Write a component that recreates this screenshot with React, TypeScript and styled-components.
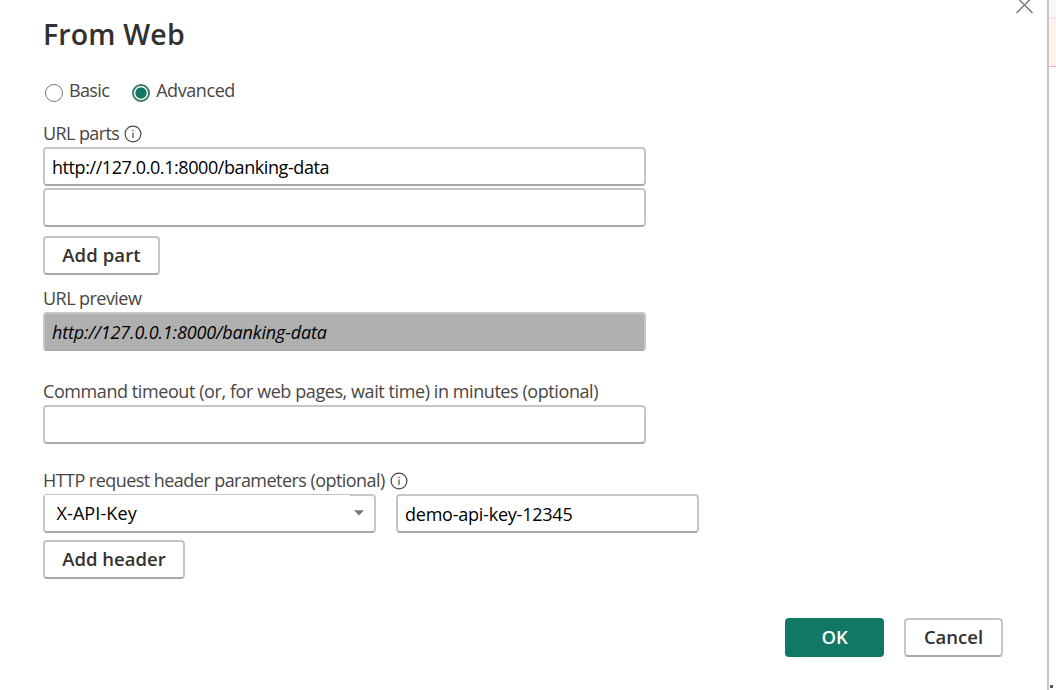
import React from "react";
import styled, { createGlobalStyle } from "styled-components";

const GlobalStyle = createGlobalStyle`
  * { box-sizing: border-box; }
  body {
    margin: 0;
    overflow: hidden;
    background: #fff;
    font-family: "Open Sans", "Noto Sans", sans-serif;
  }
`;

const Page = styled.div`
  display: flex;
  width: 1056px;
  height: 690px;
  background: #fff;
`;

const Dialog = styled.main`
  position: relative;
  display: flex;
  flex-direction: column;
  width: 1049px;
  height: 690px;
  padding: 14px 44px 0 43px;
  border-right: 2px solid #c6c6c6;
`;

const Backdrop = styled.aside`
  display: flex;
  flex-direction: column;
  width: 7px;
`;

const BackdropBar = styled.div`
  height: 19px;
  background: linear-gradient(#f9f9f9 0 16px, #e6e4e3);
`;

const BackdropAlert = styled.div`
  height: 48px;
  background: #fff1ee;
  border-bottom: 1px solid #f3b5a3;
`;

const BackdropMark = styled.div`
  width: 3px;
  height: 3px;
  margin: auto 0 2px 1px;
  background: #555;
`;

const CloseButton = styled.button`
  position: absolute;
  top: -4px;
  right: 13.5px;
  width: 19px;
  height: 19px;
  padding: 0;
  border: 0;
  background: none;
  svg { display: block; }
`;

const Label = styled.span<{ $spacing?: number }>`
  color: #484644;
  font-size: 18px;
  line-height: 24px;
  letter-spacing: ${(p) => p.$spacing ?? 0}px;
  white-space: pre;
`;

const Title = styled.h1`
  margin: 0;
  color: #323130;
  font-size: 28.5px;
  font-weight: 600;
  line-height: 40px;
  letter-spacing: 0.15px;
`;

const RadioGroup = styled.div`
  display: flex;
  gap: 23px;
  height: 24px;
  margin-top: 24px;
  padding-left: 2px;
`;

const RadioOption = styled.label`
  display: flex;
  gap: 6px;
`;

const RadioDot = styled.span<{ $checked?: boolean }>`
  width: 18px;
  height: 18px;
  margin-top: 6px;
  border: ${(p) => (p.$checked ? "2px solid #3d7a6c" : "1.5px solid #7c7c7c")};
  border-radius: 50%;
  background: ${(p) => (p.$checked ? "radial-gradient(circle, #117865 5.2px, #fff 6px)" : "#fff")};
`;

const Field = styled.section<{ $top: number }>`
  display: flex;
  flex-direction: column;
  margin-top: ${(p) => p.$top}px;
`;

const LabelRow = styled.div`
  display: flex;
  gap: 5px;
  height: 26px;
  svg { margin-top: 4.4px; }
`;

const TextBox = styled.div<{ $width?: number; $top?: number; $preview?: boolean; $spacing?: number }>`
  width: ${(p) => p.$width ?? 603}px;
  height: 39px;
  margin-top: ${(p) => p.$top ?? 0}px;
  padding: 1px 7px 0;
  border: 2px solid #c6c6c6;
  border-bottom-color: #a9a9a9;
  border-radius: 4px;
  background: ${(p) => (p.$preview ? "#b0b0b0" : "#fff")};
  color: #000;
  font-size: 18px;
  font-style: ${(p) => (p.$preview ? "italic" : "normal")};
  line-height: 34px;
  letter-spacing: ${(p) => p.$spacing ?? 0}px;
  white-space: pre;
`;

const HeaderRow = styled.div`
  display: flex;
  gap: 20px;
`;

const ComboBox = styled.div`
  display: flex;
  width: 333px;
  height: 39px;
  border: 2px solid #c6c6c6;
  border-bottom-color: #a9a9a9;
  border-radius: 4px;
  svg { margin: 14px 0 0 4px; }
`;

const ComboValue = styled.div`
  width: 305px;
  height: 34px;
  margin-top: -1px;
  padding: 1px 0 0 11.5px;
  background: #fff;
  color: #000;
  font-size: 18px;
  line-height: 34px;
  letter-spacing: 0.1px;
`;

const Button = styled.button<{ $width: number; $top?: number; $primary?: boolean; $spacing?: number }>`
  width: ${(p) => p.$width}px;
  height: 39px;
  margin-top: ${(p) => p.$top ?? 0}px;
  padding: 0 0 1px;
  border: 2px solid ${(p) => (p.$primary ? "#117865" : "#c6c6c6")};
  border-bottom-color: ${(p) => (p.$primary ? "#117865" : "#a9a9a9")};
  border-radius: 4px;
  background: ${(p) => (p.$primary ? "#117865" : "#fff")};
  color: ${(p) => (p.$primary ? "#fff" : "#323130")};
  font-family: inherit;
  font-size: 18.5px;
  font-weight: 600;
  line-height: 34px;
  letter-spacing: ${(p) => p.$spacing ?? 0}px;
  white-space: pre;
`;

const Footer = styled.footer`
  display: flex;
  justify-content: flex-end;
  gap: 20px;
  margin-top: 39px;
`;

const InfoIcon = () => (
  <svg width="18" height="18" viewBox="0 0 18 18" fill="none">
    <circle cx="9" cy="9" r="7.9" stroke="#484644" strokeWidth="1.2" />
    <path d="M9 7.5V13" stroke="#484644" strokeWidth="1.2" />
    <path d="M9 4.7V6" stroke="#484644" strokeWidth="1.3" />
  </svg>
);

export default function App() {
  return (
    <>
      <GlobalStyle />
      <Page>
        <Dialog>
          <CloseButton aria-label="Close">
            <svg width="19" height="19" viewBox="0 0 19 19" fill="none">
              <path d="M1.5 1L17.5 17M17.5 1L1.5 17" stroke="#777" strokeWidth="1.4" />
            </svg>
          </CloseButton>
          <Title>From Web</Title>
          <RadioGroup>
            <RadioOption>
              <RadioDot />
              <Label $spacing={-0.65}>Basic</Label>
            </RadioOption>
            <RadioOption>
              <RadioDot $checked />
              <Label $spacing={-0.42}>Advanced</Label>
            </RadioOption>
          </RadioGroup>

          <Field $top={19}>
            <LabelRow>
              <Label $spacing={-0.6}>URL parts</Label>
              <InfoIcon />
            </LabelRow>
            <TextBox $spacing={-0.42}>http://127.0.0.1:8000/banking-data</TextBox>
            <TextBox $top={2} />
            <Button $width={117} $top={9} $spacing={0.1}>Add part</Button>
          </Field>

          <Field $top={11}>
            <LabelRow>
              <Label $spacing={-0.55}>URL preview</Label>
            </LabelRow>
            <TextBox $preview $spacing={-0.14}>http://127.0.0.1:8000/banking-data</TextBox>
          </Field>

          <Field $top={28}>
            <LabelRow>
              <Label $spacing={-0.42}>Command timeout (or, for web pages, wait time) in minutes (optional)</Label>
            </LabelRow>
            <TextBox />
          </Field>

          <Field $top={24}>
            <LabelRow>
              <Label $spacing={-0.55}>HTTP request header parameters (optional)</Label>
              <InfoIcon />
            </LabelRow>
            <HeaderRow>
              <ComboBox>
                <ComboValue>X-API-Key</ComboValue>
                <svg width="10" height="6" viewBox="0 0 10 6">
                  <path d="M0 0.3H10L5 5.5Z" fill="#777" />
                </svg>
              </ComboBox>
              <TextBox $width={303} $spacing={-0.23}>demo-api-key-12345</TextBox>
            </HeaderRow>
            <Button $width={142} $top={7}>Add header</Button>
          </Field>

          <Footer>
            <Button $width={99} $primary $spacing={-0.2}>OK</Button>
            <Button $width={99}>Cancel</Button>
          </Footer>
        </Dialog>
        <Backdrop>
          <BackdropBar />
          <BackdropAlert />
          <BackdropMark />
        </Backdrop>
      </Page>
    </>
  );
}
